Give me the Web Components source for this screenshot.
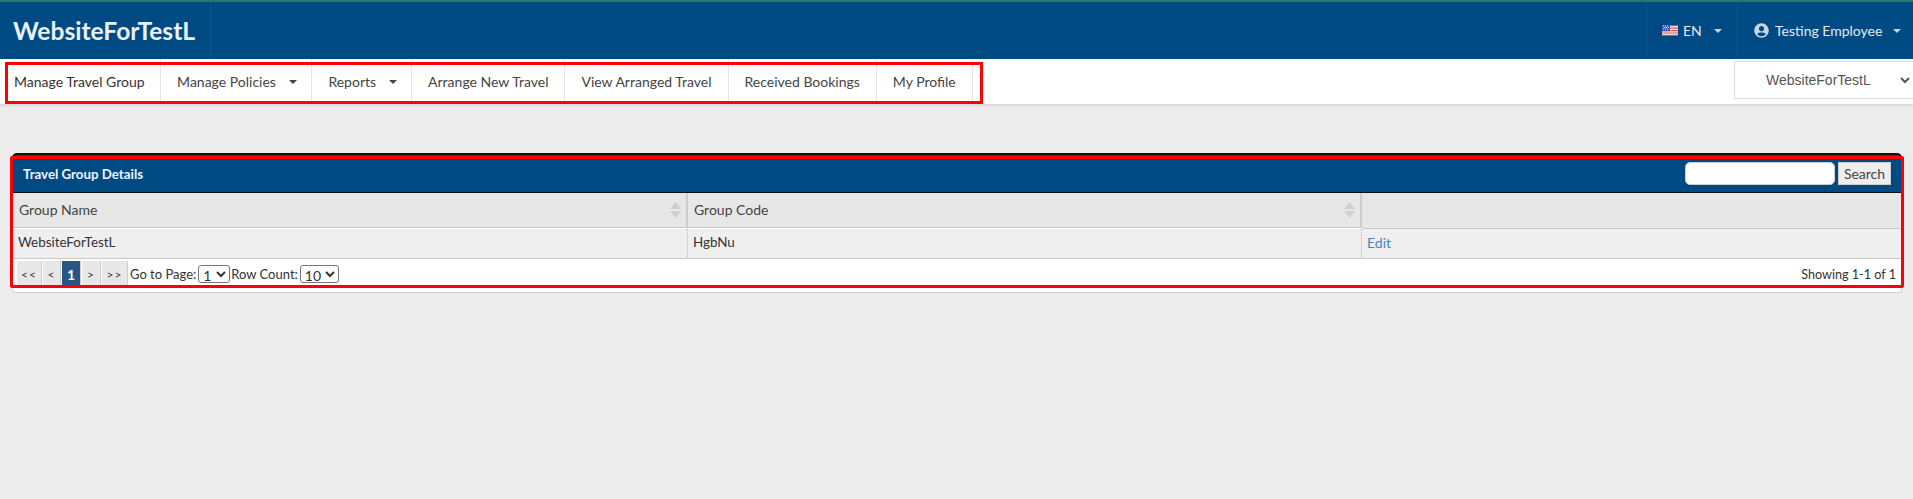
<!DOCTYPE html>
<html lang="en"><head><meta charset="utf-8"><title>Travel Group Details</title>
<style>
html,body{margin:0;padding:0;background:#ececec;height:100%;overflow:hidden}
body{font-family:Lato,"Liberation Sans",sans-serif;font-size:14px;color:#333}
</style></head><body>
<app-header></app-header>
<app-nav>
<nav-item first>Manage Travel Group</nav-item>
<nav-item caret>Manage Policies</nav-item>
<nav-item caret>Reports</nav-item>
<nav-item>Arrange New Travel</nav-item>
<nav-item>View Arranged Travel</nav-item>
<nav-item>Received Bookings</nav-item>
<nav-item>My Profile</nav-item>
</app-nav>
<group-panel></group-panel>
<script>
function def(name,html,setup){customElements.define(name,class extends HTMLElement{constructor(){super();this.attachShadow({mode:'open'}).innerHTML=html;if(setup)setup(this)}})}
const caret='<svg width="8" height="4" viewBox="0 0 8 4" aria-hidden="true"><path d="M0 0h8L4 4z" fill="currentColor"/></svg>';
def('app-header',`<style>
:host{display:flex;height:57px;background:#004a84;border-top:2px solid #1f7a7a;color:#e4ebf2;box-sizing:content-box}
.brand{width:197px;padding-left:13px;border-right:1px solid #0d5590;font-size:24.6px;font-weight:700;line-height:57px;color:#e9f0f6}
.sp{flex:1}
.it{display:flex;align-items:center;border-left:1px solid #0d5590;font-size:14px}
.lang{width:91px;padding-left:15px;box-sizing:border-box}
.user{width:176px;padding-left:16px;box-sizing:border-box}
.t{margin-left:5px}.c{display:flex;color:#c5d5e3}
.lang .c{margin-left:12px}.user .c{margin-left:11px}
</style>
<div class="brand">WebsiteForTestL</div><div class="sp"></div>
<div class="it lang"><svg width="16" height="11" viewBox="0 0 16 11" aria-hidden="true"><rect width="16" height="11" fill="#f4f4f4"/><path d="M0 0h16v1.2H0zM0 2.5h16v1.2H0zM0 5h16v1.2H0zM0 7.4h16v1.2H0zM0 9.8h16V11H0z" fill="#d8505c"/><rect width="8" height="6.2" fill="#3f5aa8"/><path d="M1 1h1M3 1h1M5 1h1M2 2.5h1M4 2.5h1M6 2.5h1M1 4h1M3 4h1M5 4h1" stroke="#fff" stroke-width=".8"/></svg><span class="t">EN</span><span class="c">${caret}</span></div>
<div class="it user"><svg width="15" height="15" viewBox="0 0 496 512" aria-hidden="true"><path fill="#c8d6e3" d="M248 8C111 8 0 119 0 256s111 248 248 248 248-111 248-248S385 8 248 8zm0 96c48.600 0 88 39.400 88 88s-39.400 88-88 88-88-39.400-88-88 39.400-88 88-88zm0 344c-58.700 0-111.300-26.600-146.500-68.200 18.800-35.400 55.600-59.800 98.500-59.800 2.400 0 4.800.4 7.100 1.100 13 4.200 26.600 6.900 40.900 6.900 14.300 0 28-2.700 40.900-6.900 2.300-.7 4.700-1.100 7.100-1.100 42.900 0 79.700 24.400 98.500 59.800C359.300 421.400 306.700 448 248 448z"/></svg><span class="t" style="margin-left:6px">Testing Employee</span><span class="c">${caret}</span></div>`);
def('nav-item',`<style>
:host{display:flex;align-items:center;padding:0 16px;border-right:1px solid #e6e6e6;font-size:14px;color:#444;height:45px;box-sizing:border-box}
:host([first]){padding:0 15px 0 14px;color:#333}
:host([caret]){padding:0 14px 0 16.500px}
svg{margin-left:13px;color:#444;display:none}
:host([caret]) svg{display:block}
</style><slot></slot>${caret}`);
def('app-nav',`<style>
:host{display:flex;position:relative;height:45px;background:#fff;box-shadow:0 2px 2px #d8d8d8;justify-content:space-between}
.l{display:flex}
select{width:179px;height:38px;margin-top:2px;border:1px solid #ddd;border-right:0;background:#fff;font:14px "Liberation Sans",Arial,sans-serif;color:#555;padding-left:27px;border-radius:0}
.mark{position:absolute;left:5px;top:3px;width:978px;height:42px;box-sizing:border-box;border:3px solid #f00;pointer-events:none}
</style><div class="l"><slot></slot></div><select><option>WebsiteForTestL</option></select><div class="mark"></div>`);
def('page-btn',`<style>
:host{display:flex;align-items:center;justify-content:center;height:26px;background:#e8e8e8;border-right:1px solid #ccc;color:#444;font-size:12px;box-sizing:border-box;letter-spacing:1px}
:host([on]){background:#2a5587;color:#fff;font-size:14px;font-weight:700;letter-spacing:0}
</style><slot></slot>`);
def('sort-th',`<style>
:host{display:flex;align-items:center;justify-content:space-between;padding:0 5px 2px 6px;border-right:2px solid #ccc;font-size:14px;color:#444;box-sizing:border-box}
svg{display:block;margin-top:2px}
</style><span><slot></slot></span><svg width="11" height="16" viewBox="0 0 11 16" aria-hidden="true"><path d="M5.500 0L11 7H0zM0 9h11l-5.500 7z" fill="#cfcfcf"/></svg>`);
def('group-panel',`<style>
:host{display:block;position:relative;margin:49px 11px 0 12px;background:#fff;border:1px solid #d0d0d0;border-top:0;border-radius:5px 5px 4px 4px;box-sizing:border-box;height:140px}
.head{display:flex;align-items:center;justify-content:space-between;background:#004a84;border-top:2px solid #111;border-bottom:1px solid #111;border-radius:5px 5px 0 0;margin:0 -1px;padding:0 11px 0 11px;box-sizing:content-box;height:37px}
.title{color:#f2f5f8;font-weight:700;font-size:13.3px;padding-top:1px}
.sr{display:flex;gap:3px}
input{width:150px;height:23px;box-sizing:border-box;border:1px solid #ccc;border-radius:5px;background:#fff;padding:0}
button{width:53px;height:23px;box-sizing:border-box;border:1px solid #ccc;background:#eee;color:#444;font:14px Lato,sans-serif;padding:0}
.g{display:grid;grid-template-columns:675px 674px 1fr}
sort-th,.e{height:35px;background:#e7e7e7;border-bottom:1px solid #c8c8c8}
.td{background:#efefef;border-bottom:1px solid #c8c8c8;padding:0 0 3px 5px;display:flex;align-items:center;font-size:13.4px;color:#333;box-sizing:border-box;height:30px;border-right:1px dotted #bbb}
.td:last-child{border-right:0}
a{color:#4585bd;text-decoration:none;font-size:14px}
.foot{display:flex;align-items:center;justify-content:space-between;height:33px;padding:0 5px 3px 4px;box-sizing:border-box;font-size:13px;color:#333}
.pg{display:flex;align-items:center}
.pb{display:flex;gap:1px;margin-right:2px}
.show{font-size:12.6px}
select{height:18px;font:14px Lato,sans-serif;color:#333;border:1px solid #777;border-radius:3px;background:#fff;padding:0;margin:0 1px 0 2px}
.mark{position:absolute;left:-3px;top:3px;width:1894px;height:132px;box-sizing:border-box;border:3px solid #f00;border-radius:2px;pointer-events:none}
</style>
<div class="head"><div class="title">Travel Group Details</div><div class="sr"><input aria-label="Search"><button>Search</button></div></div>
<div class="g"><sort-th>Group Name</sort-th><sort-th>Group Code</sort-th><div class="e"></div>
<div class="td">WebsiteForTestL</div><div class="td">HgbNu</div><div class="td"><a>Edit</a></div></div>
<div class="foot"><div class="pg"><div class="pb"><page-btn style="width:25px">&lt;&lt;</page-btn><page-btn style="width:18px">&lt;</page-btn><page-btn on style="width:19px">1</page-btn><page-btn style="width:19px">&gt;</page-btn><page-btn style="width:26px">&gt;&gt;</page-btn></div>Go to Page:<select style="width:32px"><option>1</option></select>Row Count:<select style="width:39px"><option>10</option></select></div><div class="show">Showing 1-1 of 1</div></div>
<div class="mark"></div>`);
</script>
</body></html>
